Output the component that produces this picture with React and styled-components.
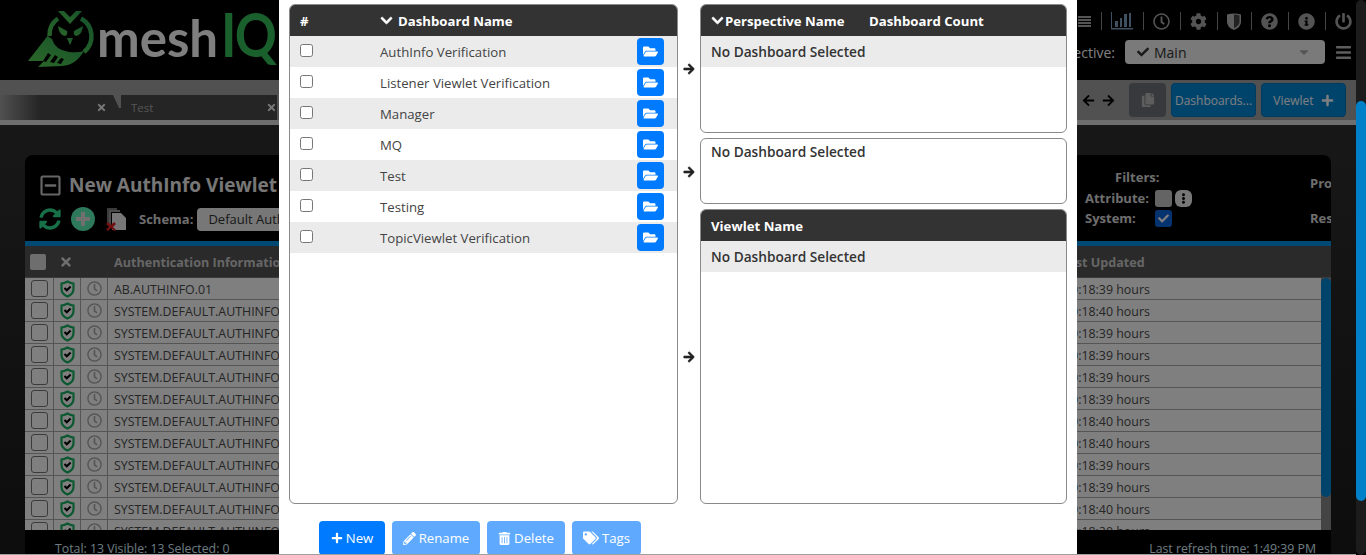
import React from 'react';
import styled, { createGlobalStyle } from 'styled-components';
import { FaChevronDown, FaArrowRight, FaArrowLeft, FaFolderOpen, FaPlus, FaPencilAlt, FaTrashAlt, FaTags, FaCheck, FaTimes, FaRegClock, FaCog, FaQuestionCircle, FaInfoCircle, FaPowerOff, FaBars, FaSyncAlt, FaRegMinusSquare, FaEllipsisV, FaCaretDown, FaCopy } from 'react-icons/fa';

const Global = createGlobalStyle`
  html, body { margin: 0; padding: 0; height: 100%; overflow: hidden; background: #000; }
  body { font-family: "Open Sans", "Noto Sans", sans-serif; font-size: 14px; }
  * { box-sizing: border-box; }
`;

const Page = styled.div`
  display: flex;
  width: 1366px;
  height: 555px;
  overflow: hidden;
`;
const Viewport = styled.div`
  position: relative;
  flex: 0 0 1356px;
  height: 555px;
  display: flex;
  flex-direction: column;
  background: linear-gradient(#363636, #1a1a1a);
  border-bottom: 1px solid #a0a0a0;
  overflow: hidden;
`;
const PageScroll = styled.div`
  position: relative;
  flex: 0 0 10px;
  background: #1c1c1c;
  border-radius: 5px;
`;
const PageThumb = styled.div`
  position: absolute;
  left: 0;
  right: 0;
  top: 101px;
  height: 400px;
  background: #0080c8;
  border-radius: 5px;
`;

const Header = styled.header`
  height: 80px;
  flex: none;
  background: #000;
  display: flex;
  justify-content: space-between;
`;
const Logo = styled.div`
  display: flex;
  align-items: center;
  padding-left: 28px;
  height: 80px;
`;
const LogoWord = styled.span`
  display: flex;
  align-items: baseline;
  font-family: "Lato", sans-serif;
  font-weight: 700;
  font-size: 51px;
  line-height: 60px;
  color: #fff;
  margin: -10px 0 0 -3px;
`;
const LogoIQ = styled.span`
  display: inline-block;
  color: #35c05a;
  font-size: 62px;
  letter-spacing: -2px;
  margin-left: 3px;
  transform: scaleX(0.84);
  transform-origin: left center;
`;
const Tools = styled.div`
  display: flex;
  flex-direction: column;
  align-items: flex-end;
  padding: 11px 4px 0 0;
`;
const IconRow = styled.div`
  display: flex;
  align-items: center;
  height: 20px;
  color: #a8a8a8;
  font-size: 17px;
`;
const Sep = styled.span`
  width: 1px;
  height: 18px;
  background: #888;
  margin: 0 9.5px;
`;
const PerspRow = styled.div`
  display: flex;
  align-items: center;
  margin-top: 9px;
  color: #fff;
  font-size: 14px;
`;
const PerspSelect = styled.div`
  width: 200px;
  height: 24px;
  margin: 0 10px;
  padding: 0 14px 0 12px;
  background: #f4f4f4;
  border-radius: 4px;
  display: flex;
  align-items: center;
  gap: 5px;
  color: #333;
`;
const PerspCaret = styled(FaCaretDown)`
  margin-left: auto;
  color: #aaa;
`;
const Burger = styled(FaBars)`
  color: #bbb;
  font-size: 17px;
`;

const TabBar = styled.div`
  flex: none;
  height: 45px;
  background: #a2a2a2;
  border-bottom: 5px solid #dcdcdc;
  display: flex;
  justify-content: space-between;
`;
const Tabs = styled.div`
  display: flex;
  align-items: flex-end;
  height: 40px;
`;
const Tab = styled.div`
  position: relative;
  height: 25px;
  width: ${p => p.$w}px;
  display: flex;
  align-items: center;
  justify-content: space-between;
  padding: 0 ${p => p.$pr}px 0 10px;
  background: ${p => p.$fade ? 'linear-gradient(90deg,#a2a2a2 0,#4a4a4a 40px)' : '#4a4a4a'};
  color: #aaa;
  font-size: 11.5px;
`;
const TabWedge = styled.span`
  position: absolute;
  top: 0;
  right: 0;
  width: 8px;
  height: 13px;
  background: #a2a2a2;
  clip-path: polygon(0 0, 100% 0, 100% 100%, 75% 100%);
`;
const TabClose = styled(FaTimes)`
  color: #eee;
  font-size: 11px;
`;
const TabActions = styled.div`
  display: flex;
  align-items: center;
  height: 40px;
  padding-right: 10px;
`;
const NavArrow = styled.span`
  display: flex;
  font-size: 13px;
  color: #000;
  margin-right: 7px;
`;
const CopyBtn = styled.div`
  width: 37px;
  height: 34px;
  margin: 0 5px 0 7px;
  background: #707278;
  border-radius: 4px;
  display: flex;
  align-items: center;
  justify-content: center;
  color: #bbb;
  font-size: 14px;
`;
const BlueBtn = styled.div`
  width: 85px;
  height: 34px;
  margin-left: ${p => p.$ml || 0}px;
  background: #0088d8;
  border: 1px solid #0074b8;
  border-radius: 4px;
  color: #fff;
  font-size: 12px;
  display: flex;
  align-items: center;
  justify-content: center;
  gap: 7px;
  white-space: nowrap;
`;

const Body = styled.main`
  flex: 1;
  min-height: 0;
  padding: 30px 25px 0;
`;
const Card = styled.section`
  height: 400px;
  background: #000;
  border-radius: 8px 8px 0 0;
  display: flex;
  flex-direction: column;
  overflow: hidden;
`;
const CardTop = styled.div`
  height: 86px;
  flex: none;
  display: flex;
  justify-content: space-between;
  color: #ddd;
  font-weight: 700;
  font-size: 13px;
`;
const CardLeft = styled.div`
  padding: 17px 0 0 14px;
`;
const Title = styled.div`
  display: flex;
  align-items: center;
  gap: 7px;
  font-size: 19px;
  line-height: 26px;
  white-space: nowrap;
  color: #eee;
`;
const MinusIcon = styled(FaRegMinusSquare)`
  font-size: 23px;
  color: #ccc;
`;
const ActionRow = styled.div`
  display: flex;
  align-items: center;
  margin-top: 9px;
`;
const Refresh = styled(FaSyncAlt)`
  font-size: 22px;
  color: #2ce090;
`;
const Schema = styled.span`
  margin-left: 12px;
`;
const SchemaSelect = styled.div`
  width: 300px;
  height: 23px;
  margin-left: 4px;
  background: #eee;
  border-radius: 4px;
  color: #333;
  font-weight: 400;
  padding-left: 11px;
  line-height: 23px;
`;
const CardRight = styled.div`
  display: flex;
  width: 246px;
`;
const FilterBox = styled.div`
  width: 225px;
  padding-top: 12px;
`;
const FilterHead = styled.div`
  padding-left: 30px;
  line-height: 21px;
`;
const FilterRow = styled.div`
  display: flex;
  align-items: center;
  height: 20px;
`;
const FilterLabel = styled.span`
  width: 70px;
`;
const Square = styled.span`
  width: 17px;
  height: 17px;
  border-radius: 3px;
  background: ${p => p.$on ? '#0a66e0' : '#c8c8c8'};
  color: #fff;
  display: flex;
  align-items: center;
  justify-content: center;
  font-size: 11px;
`;
const Dots = styled.span`
  width: 17px;
  height: 17px;
  margin-left: 3px;
  border-radius: 6px;
  background: #eee;
  color: #111;
  display: flex;
  align-items: center;
  justify-content: center;
  font-size: 11px;
`;
const ProCol = styled.div`
  width: 21px;
  overflow: hidden;
  padding-top: 11px;
  line-height: 35px;
  white-space: nowrap;
`;
const Strip = styled.div`
  height: 5px;
  flex: none;
  background: #0092e4;
`;
const THead = styled.div`
  height: 32px;
  flex: none;
  padding-top: 1px;
  background: #555;
  border-bottom: 1px solid #777;
  display: flex;
  align-items: center;
  color: #ccc;
  font-weight: 700;
  font-size: 12.6px;
`;
const THeadCheck = styled.span`
  width: 16px;
  height: 16px;
  margin-left: 5px;
  border-radius: 2px;
  background: #ddd;
`;
const THeadX = styled(FaTimes)`
  margin-left: 13px;
  font-size: 14px;
  color: #ddd;
`;
const THeadName = styled.span`
  margin-left: 41px;
  width: 947px;
  white-space: nowrap;
`;
const TBody = styled.div`
  flex: 1;
  min-height: 0;
  display: flex;
  overflow: hidden;
`;
const Rows = styled.div`
  flex: 1;
  background: #fff;
`;
const Row = styled.div`
  height: 22px;
  display: flex;
  align-items: center;
  border-bottom: 1px solid #aaa;
  color: #4a4a4a;
  font-size: 12.4px;
`;
const Cell = styled.div`
  height: 100%;
  width: ${p => p.$w}px;
  flex: none;
  display: flex;
  align-items: center;
  justify-content: ${p => p.$center ? 'center' : 'flex-start'};
  border-right: ${p => p.$line ? '1px solid #aaa' : '0'};
  padding-left: ${p => p.$pl || 0}px;
  padding-top: ${p => p.$center ? 0 : 1}px;
  white-space: nowrap;
`;
const RowCheck = styled.span`
  width: 17px;
  height: 17px;
  border: 1px solid #777;
  border-radius: 3px;
  background: #fff;
`;
const ClockIcon = styled(FaRegClock)`
  font-size: 15px;
  color: #aaa;
`;
const TScroll = styled.div`
  width: 10px;
  flex: none;
  background: #888;
`;
const TThumb = styled.div`
  height: 219px;
  background: #0088d8;
  border-radius: 5px;
`;
const Status = styled.footer`
  position: absolute;
  left: 25px;
  width: 1306px;
  bottom: 0;
  height: 24px;
  padding: 12px 15px 0 30px;
  background: #000;
  display: flex;
  align-items: center;
  justify-content: space-between;
  color: #dcf4ff;
  font-size: 12.3px;
`;

const Overlay = styled.div`
  position: absolute;
  inset: 0 0 -1px 0;
  background: rgba(0, 0, 0, 0.5);
  display: flex;
  justify-content: center;
`;
const Modal = styled.div`
  width: 798px;
  height: 555px;
  background: #fff;
  padding: 4px 10px 0;
  color: #333;
  overflow: hidden;
`;
const Columns = styled.div`
  display: flex;
  height: 500px;
`;
const Panel = styled.div`
  border: 1px solid #8a8a8a;
  border-radius: 6px;
  overflow: hidden;
  background: #fff;
  height: ${p => p.$h ? p.$h + 'px' : 'auto'};
  flex: ${p => p.$flex ? 1 : 'none'};
  width: ${p => p.$w ? p.$w + 'px' : 'auto'};
  min-width: 0;
`;
const PanelHead = styled.div`
  height: 31px;
  background: #333;
  color: #fff;
  font-weight: 700;
  font-size: 13.2px;
  display: flex;
  align-items: center;
  white-space: nowrap;
`;
const Hash = styled.span`
  margin-left: 10px;
  width: 70px;
`;
const NameChevron = styled(FaChevronDown)`
  font-size: 13px;
  margin-right: ${p => p.$gap}px;
  stroke: currentColor;
  stroke-width: 30;
`;
const HeadName = styled.span`
  display: flex;
  align-items: center;
  margin-left: 10px;
  width: 158px;
`;
const DashRow = styled.div`
  height: 31px;
  background: ${p => p.$alt ? '#ebebeb' : '#fff'};
  display: flex;
  align-items: center;
  padding-left: 10px;
`;
const RowBox = styled.input`
  width: 13px;
  height: 13px;
  margin: -3px 67px 0 0;
  flex: none;
`;
const DashName = styled.span`
  flex: 1;
  font-size: 13.2px;
  color: #444;
`;
const FolderBtn = styled.div`
  width: 27px;
  height: 27px;
  margin-right: 13px;
  background: #007bff;
  border-radius: 4px;
  color: #fff;
  display: flex;
  align-items: center;
  justify-content: center;
  font-size: 15px;
`;
const RightCol = styled.div`
  flex: 1;
  display: flex;
  flex-direction: column;
  gap: 5px;
  min-width: 0;
`;
const ArrowRow = styled.div`
  display: flex;
  align-items: center;
  flex: ${p => p.$flex ? 1 : 'none'};
  min-height: 0;
`;
const ArrowSlot = styled.div`
  width: 22px;
  flex: none;
  display: flex;
  justify-content: center;
  padding-top: 1px;
  font-size: 12px;
  color: #222;
  svg { stroke: currentColor; stroke-width: 30; }
`;
const Empty = styled.div`
  height: 31px;
  background: ${p => p.$plain ? 'transparent' : '#ebebeb'};
  padding-left: 10px;
  margin-top: ${p => p.$plain ? -3 : 0}px;
  font-weight: 600;
  font-size: 13.7px;
  line-height: 32px;
  color: #333;
`;
const ButtonRow = styled.div`
  display: flex;
  gap: 7px;
  padding-left: 30px;
  margin-top: 17px;
`;
const Btn = styled.button`
  height: 34px;
  width: ${p => p.$w}px;
  padding: 0;
  border: 0;
  border-radius: 4px;
  background: ${p => p.$off ? '#5faaff' : '#007bff'};
  color: #fff;
  font: 400 13.2px "Open Sans", sans-serif;
  display: flex;
  align-items: center;
  justify-content: center;
  gap: 3px;
`;

const Owl = () => (
  <svg width="72" height="60" viewBox="28 12 72 60">
    <defs>
      <linearGradient id="g" x1="0" y1="1" x2="1" y2="0">
        <stop offset="0" stopColor="#58d050" />
        <stop offset="1" stopColor="#2fa858" />
      </linearGradient>
    </defs>
    <path fill="none" stroke="url(#g)" strokeWidth="4.500" d="M58 20.500A20 20 0 0 0 49.500 38M81 20.500A20.300 20.300 0 0 1 84 54" />
    <path fill="url(#g)" d="M58 13h6l6 6 6-6h6l-12 13z" />
    <path fill="url(#g)" d="M58 28l9 5q1 4-2 5-6-1-7-10zM83 28l-9 5q-1 4 2 5 6-1 7-10z" />
    <path fill="url(#g)" d="M67 40h6l-3 7z" />
    <path fill="url(#g)" d="M47.500 38l4.500 3q3 11 17 13 9 1 15-1-8 14-22 15l-24 1 6-6H28z" />
    <path fill="#000" d="M43 63l5-8 3 2-5 7zM50 64l5-7 3 2-4 6zM57 65l4-5 3 1-3 5z" />
  </svg>
);

const AddIcon = () => (
  <svg width="24" height="24" viewBox="0 0 24 24" style={{ marginLeft: 10 }}>
    <circle cx="12" cy="12" r="12" fill="#5cf0b8" />
    <path fill="#e0e0e0" d="M10 5h4v5h5v4h-5v5h-4v-5H5v-4h5z" />
  </svg>
);
const ListIcon = () => (
  <svg width="13" height="13" viewBox="0 0 13 13" fill="currentColor">
    <path d="M0 1h13v2H0zM0 4h13v2H0zM0 7h13v2H0zM0 10h13v2H0z" />
  </svg>
);
const BarsIcon = () => (
  <svg width="22" height="18" viewBox="0 0 22 18" fill="#7fa0c0">
    <path d="M0 0h1v16h21v1.500H0zM4 9h3v6H4zM9 6h2v9H9zM13 2h3v13h-3zM18 1h2v14h-2z" />
  </svg>
);
const ShieldIcon = () => (
  <svg width="14" height="17" viewBox="0 0 14 17">
    <path fill="#bbb" d="M0 1.500Q7-.5 14 1.500V9q0 5-7 8-7-3-7-8z" />
    <path fill="#444" d="M7 1.500q3.500 0 5.500 1V9q0 3.500-5.500 6.300z" />
  </svg>
);
const RowShield = () => (
  <svg width="15" height="18" viewBox="0 0 15 18">
    <path fill="#fff" stroke="#18b060" strokeWidth="2.200" d="M7.500 1.500q3 1.800 6 2V9q0 5-6 7.500Q1.500 14 1.500 9V3.500q3-.2 6-2z" />
    <path fill="none" stroke="#000" strokeWidth="2" d="M4.500 8l2.300 2.300 3.800-3.800" />
  </svg>
);
const DocsX = () => (
  <svg width="21" height="24" viewBox="0 0 21 24" style={{ marginLeft: 11 }}>
    <path fill="#777" d="M1 1h10v2H3v14H1z" />
    <path fill="#999" d="M3 3h11v2H5v14H3z" />
    <path fill="#eee" d="M6 6h9l5 5v12H6z" />
    <path fill="#e02020" d="M0 17l2-2 3 3 3-3 2 2-3 3 3 3-2 1-3-3-3 3-2-2 3-2z" />
  </svg>
);

const dashboards = ['AuthInfo Verification', 'Listener Viewlet Verification', 'Manager', 'MQ', 'Test', 'Testing', 'TopicViewlet Verification'];
const secs = ['39', '40', '39', '39', '39', '39', '40', '40', '39', '39', '40', '20'];

export default function App() {
  return (
    <Page>
      <Global />
      <Viewport>
        <Header>
          <Logo>
            <Owl />
            <LogoWord>mesh<LogoIQ>IQ</LogoIQ></LogoWord>
          </Logo>
          <Tools>
            <IconRow>
              <ListIcon /><Sep /><BarsIcon /><Sep /><FaRegClock /><Sep /><FaCog /><Sep /><ShieldIcon /><Sep /><FaQuestionCircle /><Sep /><FaInfoCircle /><Sep /><FaPowerOff />
            </IconRow>
            <PerspRow>
              Perspective:
              <PerspSelect><FaCheck size={12} />Main<PerspCaret /></PerspSelect>
              <Burger />
            </PerspRow>
          </Tools>
        </Header>
        <TabBar>
          <Tabs>
            <Tab $w={121} $pr={14} $fade><span /><TabClose /><TabWedge /></Tab>
            <Tab $w={156} $pr={0}>Test<TabClose /></Tab>
          </Tabs>
          <TabActions>
            <NavArrow><FaArrowLeft /></NavArrow>
            <NavArrow><FaArrowRight /></NavArrow>
            <CopyBtn><FaCopy /></CopyBtn>
            <BlueBtn>Dashboards...</BlueBtn>
            <BlueBtn $ml={5}>Viewlet <FaPlus size={13} /></BlueBtn>
          </TabActions>
        </TabBar>
        <Body>
          <Card>
            <CardTop>
              <CardLeft>
                <Title><MinusIcon />New AuthInfo Viewlet</Title>
                <ActionRow>
                  <Refresh /><AddIcon /><DocsX />
                  <Schema>Schema:</Schema>
                  <SchemaSelect>Default Authentication</SchemaSelect>
                </ActionRow>
              </CardLeft>
              <CardRight>
                <FilterBox>
                  <FilterHead>Filters:</FilterHead>
                  <FilterRow><FilterLabel>Attribute:</FilterLabel><Square /><Dots><FaEllipsisV /></Dots></FilterRow>
                  <FilterRow><FilterLabel>System:</FilterLabel><Square $on><FaCheck /></Square></FilterRow>
                </FilterBox>
                <ProCol>Pro<br />Res</ProCol>
              </CardRight>
            </CardTop>
            <Strip />
            <THead>
              <THeadCheck /><THeadX />
              <THeadName>Authentication Information</THeadName>
              <span>Last Updated</span>
            </THead>
            <TBody>
              <Rows>
                {secs.map((s, i) => (
                  <Row key={i}>
                    <Cell $w={29} $line $center><RowCheck /></Cell>
                    <Cell $w={27} $line $center><RowShield /></Cell>
                    <Cell $w={27} $line $center><ClockIcon /></Cell>
                    <Cell $w={956} $pl={6}>{i === 0 ? 'AB.AUTHINFO.01' : 'SYSTEM.DEFAULT.AUTHINFO.CRLLDAP'}</Cell>
                    <Cell $w={200}>00:18:{s} hours</Cell>
                  </Row>
                ))}
              </Rows>
              <TScroll><TThumb /></TScroll>
            </TBody>
          </Card>
        </Body>
        <Status>
          <span>Total: 13 Visible: 13 Selected: 0</span>
          <span>Last refresh time: 1:49:39 PM</span>
        </Status>
        <Overlay>
          <Modal>
            <Columns>
              <Panel $w={389}>
                <PanelHead>
                  <Hash>#</Hash>
                  <HeadName><NameChevron $gap={5} />Dashboard Name</HeadName>
                </PanelHead>
                {dashboards.map((d, i) => (
                  <DashRow key={d} $alt={i % 2 === 0}>
                    <RowBox type="checkbox" />
                    <DashName>{d}</DashName>
                    <FolderBtn><FaFolderOpen /></FolderBtn>
                  </DashRow>
                ))}
              </Panel>
              <RightCol>
                <ArrowRow>
                  <ArrowSlot><FaArrowRight /></ArrowSlot>
                  <Panel $flex $h={129}>
                    <PanelHead>
                      <HeadName><NameChevron $gap={1} />Perspective Name</HeadName>
                      Dashboard Count
                    </PanelHead>
                    <Empty>No Dashboard Selected</Empty>
                  </Panel>
                </ArrowRow>
                <ArrowRow>
                  <ArrowSlot><FaArrowRight /></ArrowSlot>
                  <Panel $flex $h={66}>
                    <Empty $plain>No Dashboard Selected</Empty>
                  </Panel>
                </ArrowRow>
                <ArrowRow $flex>
                  <ArrowSlot><FaArrowRight /></ArrowSlot>
                  <Panel $flex $h={295}>
                    <PanelHead><HeadName>Viewlet Name</HeadName></PanelHead>
                    <Empty>No Dashboard Selected</Empty>
                  </Panel>
                </ArrowRow>
              </RightCol>
            </Columns>
            <ButtonRow>
              <Btn $w={66}><FaPlus size={12} />New</Btn>
              <Btn $w={88} $off><FaPencilAlt size={13} />Rename</Btn>
              <Btn $w={78} $off><FaTrashAlt size={13} />Delete</Btn>
              <Btn $w={69} $off><FaTags size={16} />Tags</Btn>
            </ButtonRow>
          </Modal>
        </Overlay>
      </Viewport>
      <PageScroll><PageThumb /></PageScroll>
    </Page>
  );
}
